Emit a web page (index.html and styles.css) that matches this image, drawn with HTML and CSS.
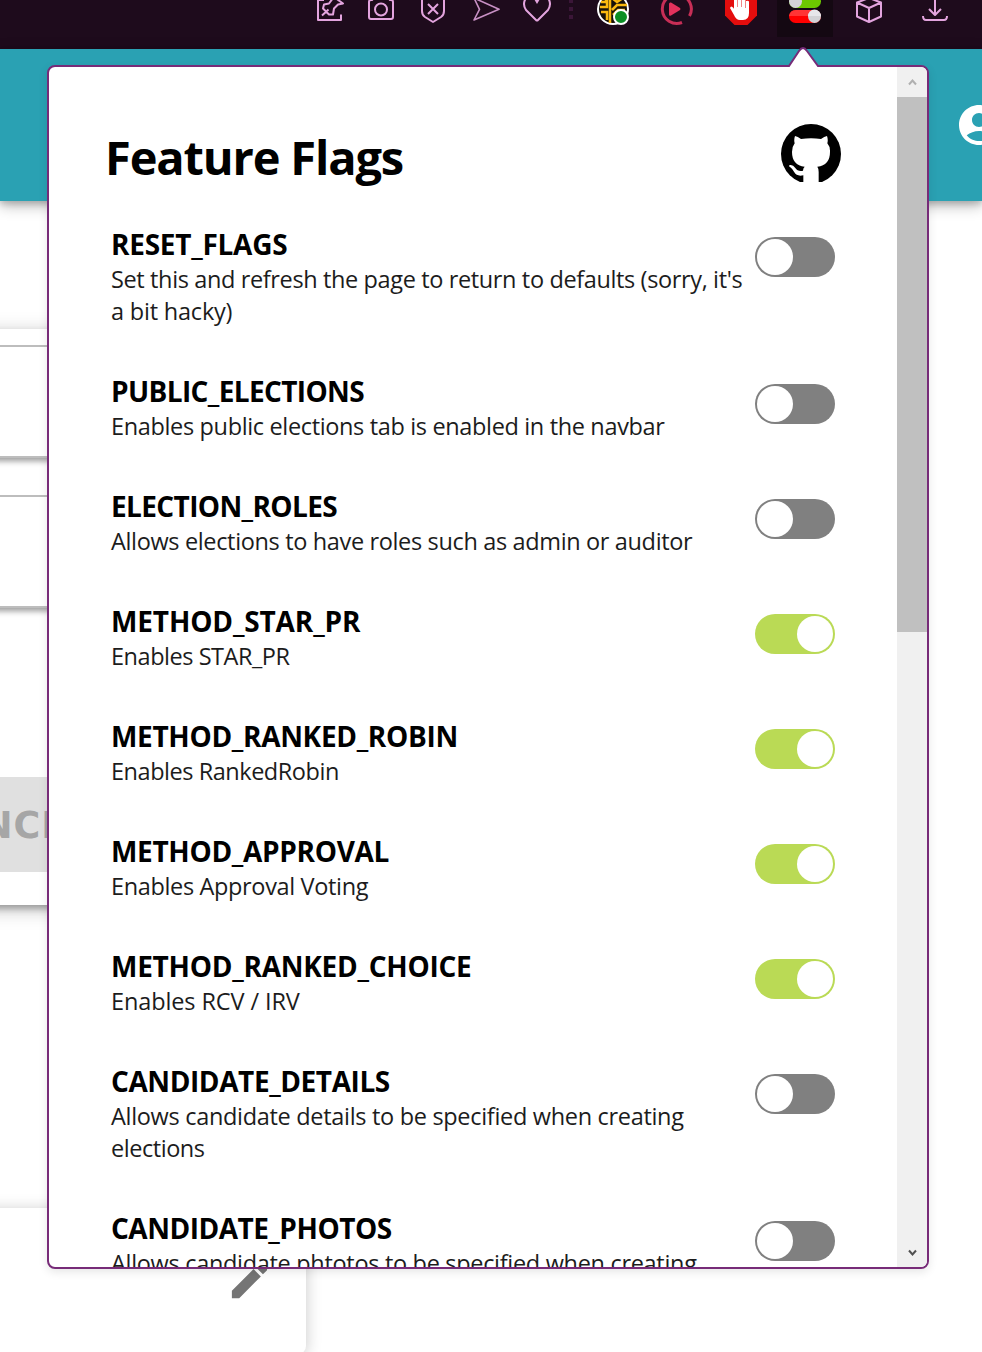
FILE: index.html
```
<!DOCTYPE html>
<html lang="en">
<head>
<meta charset="utf-8">
<title>Feature Flags</title>
<link rel="stylesheet" href="styles.css">
</head>
<body>
<div class="browser">
  <header class="toolbar">
    <svg class="tool" viewBox="0 0 52 49"><path d="M21 0H15V20H38V14.500"/><path d="M31-3l9 6.500-5 1-4 4-1 6-4 0-6-6 1-4 5-1 3-4zM25.500 9.500l-6.500 6"/></svg>
    <svg class="tool" viewBox="0 0 52 49"><path d="M14 0H17L19-2H33L35 0H36Q38 0 38 2V17Q38 19 36 19H16Q14 19 14 17V2Q14 0 16 0"/><circle cx="26" cy="9.500" r="6"/></svg>
    <svg class="tool" viewBox="0 0 52 49"><path d="M15-2V11Q15 15 18 17L26 22 34 17Q37 15 37 11V-2M21 4L31 14M31 4L21 14"/></svg>
    <svg class="tool thin" viewBox="0 0 52 49"><path d="M15-2L40 9.300 15 20 20.500 9.300z"/></svg>
    <svg class="tool" viewBox="0 0 52 49"><path d="M26 21L15 10Q11 4 15-2M26 21L37 10Q41 4 37-2"/><path class="pink" d="M23-1h6l-3 5z"/></svg>
    <svg class="dots" viewBox="0 0 18 49"><path d="M6-1h4v4H6zM6 7h4v4H6zM6 15h4v4H6z"/></svg>
    <svg class="ext" viewBox="0 0 64 49">
      <circle cx="32" cy="9" r="15" fill="#17120a" stroke="#fff" stroke-width="2"/>
      <g fill="none" stroke="#f9b80f" stroke-width="2.500"><path d="M20 2h5v-4M19 7h7v-9M20 12h6v8M29 23V-3M31-2l5 4 6-4M46 5H36l-5 5M44 10h-7l-5 5"/></g>
      <circle cx="40" cy="17" r="7" fill="#0b8f25" stroke="#fff" stroke-width="2"/>
    </svg>
    <svg class="ext" viewBox="0 0 64 49">
      <g fill="none" stroke="#c82e56" stroke-width="3"><path d="M37 22.500A14.500 14.500 0 1 1 44.500 16"/></g>
      <path fill="#e3315c" d="M24 4q0-2 2-1.500l9 5.500q1 1 0 2l-9 5.500q-2 1-2-1z"/>
    </svg>
    <svg class="ext" viewBox="0 0 64 49">
      <path fill="#e40d0d" d="M16-2V15.500L25.500 25H38.500L48 15.500V-2z"/>
      <path fill="#fff" d="M25-1h3.500V7h.5V-3h3.500V7h.5V-3h3.500V8h.5V1q3-1 3 1V13q0 7-6 7h-3q-4 0-6-5l-4-7q1-3 3.500 0l.5 1z"/>
    </svg>
    <svg class="ext" viewBox="0 0 64 49">
      <path fill="#140812" d="M4 0h56v37H4z"/>
      <rect x="16" y="-5" width="32" height="13" rx="6.500" fill="#6cc800"/><path fill="#55b000" d="M22-5h22v5H22z"/>
      <circle cx="22.500" cy="1.500" r="6.500" fill="#d2d2d6"/>
      <rect x="16" y="10" width="32" height="13" rx="6.500" fill="#f00"/><path fill="#ff3434" d="M16 16q1-6 7-6h18v6z"/>
      <circle cx="41.500" cy="16.500" r="6.500" fill="#d2d2d6"/><path fill="#e6e6ea" d="M35 16a6.500 6.500 0 0 1 13 0z"/>
    </svg>
    <svg class="ext line" viewBox="0 0 64 49"><path d="M20 2.500L32-2 44 2.500V16.500L32 22 20 16.500zM20 2.500L32 8 44 2.500M32 8V22"/></svg>
    <svg class="last line" viewBox="0 0 68 49"><path d="M34-2V14.500M28 9l6 6 6-6M22 16Q22 20 25 20H43Q46 20 46 16"/></svg>
  </header>

  <div class="site-bar">
    <svg class="account" viewBox="0 0 24 24"><path d="M12 2C6.480 2 2 6.480 2 12s4.480 10 10 10 10-4.480 10-10S17.520 2 12 2zm0 4c1.930 0 3.500 1.570 3.500 3.500S13.930 13 12 13s-3.500-1.570-3.500-3.500S10.070 6 12 6zm0 14c-2.030 0-4.430-.820-6.140-2.880C7.550 15.800 9.680 15 12 15s4.450.800 6.140 2.120C16.430 19.180 14.030 20 12 20z"/></svg>
  </div>

  <main class="site">
    <section class="form-card">
      <div class="field"></div>
      <div class="field"></div>
      <div class="cancel">CANCEL</div>
    </section>
    <section class="edit-card">
      <svg class="pencil" viewBox="0 0 24 24"><path d="M3 17.250V21h3.750L17.810 9.940l-3.750-3.750L3 17.250zM20.710 7.040c.390-.390.390-1.020 0-1.410l-2.340-2.340c-.390-.390-1.020-.390-1.410 0l-1.830 1.830 3.750 3.750 1.830-1.830z"/></svg>
    </section>
  </main>

  <aside class="popup">
    <div class="content">
      <div class="heading">
        <h1>Feature Flags</h1>
        <svg class="github" viewBox="0 0 180 180"><circle cx="90" cy="90" r="90"/><path fill="#fff" d="M42 36Q50 37 60 45Q90 40 120 45Q130 37 138 36Q142 47 139 58Q148 68 147 84Q147 124 109 128Q113 133 113 144V182H67V154Q47 158 40 145Q35 135 28 130Q22 127 26 123Q36 121 43 132Q50 143 66 140Q66 133 71 128Q33 124 33 84Q33 68 41 58Q38 47 42 36z"/></svg>
      </div>
      <div class="flag"><div class="text"><h2 class="t1">RESET_FLAGS</h2><p class="d1">Set this and refresh the page to return to defaults (sorry, it's<br><span class="d1b">a bit hacky)</span></p></div><span class="switch"></span></div>
      <div class="flag"><div class="text"><h2 class="t2">PUBLIC_ELECTIONS</h2><p>Enables public elections tab is enabled in the navbar</p></div><span class="switch"></span></div>
      <div class="flag"><div class="text"><h2 class="t2">ELECTION_ROLES</h2><p>Allows elections to have roles such as admin or auditor</p></div><span class="switch"></span></div>
      <div class="flag"><div class="text"><h2 class="t4">METHOD_STAR_PR</h2><p class="d4">Enables STAR_PR</p></div><span class="switch on"></span></div>
      <div class="flag"><div class="text"><h2 class="t5">METHOD_RANKED_ROBIN</h2><p class="d4">Enables RankedRobin</p></div><span class="switch on"></span></div>
      <div class="flag"><div class="text"><h2 class="t5">METHOD_APPROVAL</h2><p>Enables Approval Voting</p></div><span class="switch on"></span></div>
      <div class="flag"><div class="text"><h2 class="t1">METHOD_RANKED_CHOICE</h2><p class="d7">Enables RCV / IRV</p></div><span class="switch on"></span></div>
      <div class="flag"><div class="text"><h2 class="t8">CANDIDATE_DETAILS</h2><p class="d8">Allows candidate details to be specified when creating<br><span class="d4">elections</span></p></div><span class="switch"></span></div>
      <div class="flag"><div class="text"><h2 class="t9">CANDIDATE_PHOTOS</h2><p class="d8">Allows candidate phtotos to be specified when creating</p></div><span class="switch"></span></div>
    </div>
    <div class="scrollbar">
      <svg class="arrow up" viewBox="0 0 30 30"><path d="M12 17.500l3.500-4 3.500 4"/></svg>
      <div class="thumb"></div>
      <svg class="arrow down" viewBox="0 0 30 30"><path d="M12 13.500l3.500 4 3.500-4"/></svg>
    </div>
  </aside>
  <svg class="notch" viewBox="0 0 36 22"><path class="fill" d="M4 22V20L14 5Q18 0 22 5L33 20V22z"/><path class="edge" d="M3 20H4L14 5Q18-1 22 5L33 20H34"/></svg>
</div>
</body>
</html>
```
FILE: styles.css
```
* { box-sizing: border-box; }
body { margin: 0; background: #fff; font-family: "Open Sans", "Noto Sans", sans-serif; }
svg { display: block; flex: none; }
.browser { position: relative; width: 982px; height: 1352px; overflow: hidden; display: flex; flex-direction: column; }

.toolbar { flex: none; height: 49px; padding-left: 303px; display: flex; background: #1e0b1c; }
.toolbar svg { height: 49px; }
.tool { width: 52px; }
.dots { width: 18px; fill: #3b1638; }
.ext { width: 64px; }
.last { width: 68px; }
.tool, .line { fill: none; stroke: #e3a4de; stroke-width: 2; stroke-linejoin: round; }
.thin { stroke-width: 1.6; stroke: #c890c4; }
.pink { fill: #e3a4de; stroke: none; }

.site-bar { position: relative; z-index: 1; flex: none; height: 152px; display: flex; align-items: center; justify-content: flex-end; background: #2aa1b3; box-shadow: 0 4px 14px rgba(0,0,0,.3), 0 3px 6px rgba(0,0,0,.15); }
.account { width: 48px; height: 48px; margin-right: -21px; fill: #fff; }

.site { flex: 1; min-height: 0; display: flex; flex-direction: column; }
.form-card { flex: none; width: 740px; height: 576px; margin: 128px 0 0 -40px; padding-top: 16px; display: flex; flex-direction: column; background: #fff; box-shadow: 0 4px 18px rgba(0,0,0,.25), 0 4px 6px rgba(0,0,0,.25); }
.field { height: 113px; margin-bottom: 37px; flex: none; background: #fff; border: solid #bdbdbd; border-width: 2px 0; box-shadow: 0 3px 6px rgba(0,0,0,.4); clip-path: inset(0 0 -16px); }
.cancel { height: 95px; width: 190px; margin-top: 132px; margin-left: -35px; flex: none; background: #e0e0e0; color: #a6a6a6; font: bold 36.5px/97px "DejaVu Sans", sans-serif; letter-spacing: 1px; }
.edit-card { flex: none; width: 346px; height: 146px; margin: 303px 0 0 -40px; padding: 49px 0 0 266px; background: #fff; border-radius: 0 0 8px; box-shadow: 0 2px 16px rgba(0,0,0,.22); }
.pencil { width: 47px; height: 47px; fill: #757575; }

.popup { position: absolute; z-index: 2; left: 47px; top: 65px; width: 882px; height: 1204px; display: flex; overflow: hidden; background: #fff; border: 2px solid #772b78; border-radius: 8px; box-shadow: 0 3px 10px rgba(0,0,0,.1); }
.content { flex: 1; min-width: 0; padding: 57px 56px 0 57px; overflow: hidden; }
.heading { height: 103px; display: flex; align-items: flex-start; justify-content: space-between; }
h1 { margin: 0 0 0 -1px; color: #000; font-size: 47px; line-height: 66px; font-weight: 700; letter-spacing: -1.15px; white-space: nowrap; }
.github { width: 60px; height: 60px; clip-path: inset(0 0 2px); }
.flag { display: flex; justify-content: space-between; margin-bottom: 46px; padding: 0 6px 0 5px; }
.text { width: 640px; margin: -1px 0 1px; white-space: nowrap; }
h2 { margin: 0; color: #000; font-size: 28px; line-height: 37px; font-weight: 700; }
p { margin: 0; color: #1c1c1c; font-size: 23.5px; line-height: 32px; letter-spacing: -.35px; }
.t1 { letter-spacing: -.26px; }
.t2 { letter-spacing: -.62px; }
.t4 { letter-spacing: -.14px; }
.t5 { letter-spacing: -.32px; }
.t8 { letter-spacing: -.41px; }
.t9 { letter-spacing: -.5px; }
.d1 { letter-spacing: -.37px; }
.d1b { letter-spacing: -.2px; }
.d4 { letter-spacing: -.46px; }
.d7 { letter-spacing: -.11px; }
.d8 { letter-spacing: -.31px; }
.switch { flex: none; display: flex; width: 80px; height: 40px; margin-top: 10px; padding: 2px; border-radius: 20px; background: #808080; }
.switch::before { content: ""; width: 36px; height: 36px; border-radius: 50%; background: #fff; }
.on { justify-content: flex-end; background: #bada55; }

.scrollbar { flex: none; width: 30px; display: flex; flex-direction: column; background: #f0f0f0; }
.thumb { height: 535px; background: #c0c0c0; }
.arrow { width: 30px; height: 30px; fill: none; stroke-width: 2; }
.up { stroke: #b0b0b0; }
.down { margin-top: auto; stroke: #505050; }

.notch { position: absolute; z-index: 3; left: 785px; top: 46px; width: 36px; height: 22px; overflow: visible; }
.notch .fill { fill: #fff; }
.notch .edge { fill: none; stroke: #772b78; stroke-width: 2; }
```
